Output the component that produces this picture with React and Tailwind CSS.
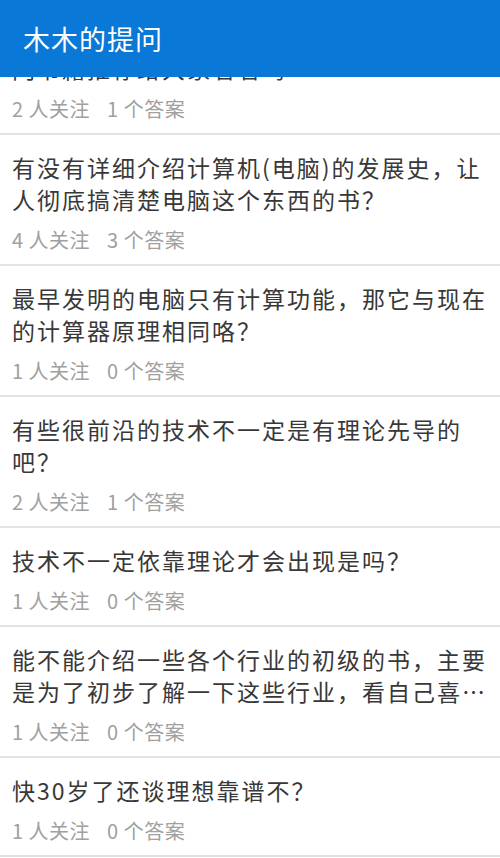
import React from "react";

const items = [
  { title: "有哪些适合初学者阅读的经典计算机科学入门书籍推荐给大家看看吗", meta: ["2", "1"] },
  { title: "有没有详细介绍计算机(电脑)的发展史，让人彻底搞清楚电脑这个东西的书？", meta: ["4", "3"] },
  { title: "最早发明的电脑只有计算功能，那它与现在的计算器原理相同咯？", meta: ["1", "0"] },
  { title: "有些很前沿的技术不一定是有理论先导的吧？", meta: ["2", "1"] },
  { title: "技术不一定依靠理论才会出现是吗？", meta: ["1", "0"] },
  { title: "能不能介绍一些各个行业的初级的书，主要是为了初步了解一下这些行业，看自己喜欢哪个行业", meta: ["1", "0"] },
  { title: "快30岁了还谈理想靠谱不？", meta: ["1", "0"] },
];

const font = { fontFamily: '"Noto Sans CJK SC", "Noto Sans", sans-serif' };

export default function App() {
  return (
    <div className="w-[500px] h-[858px] bg-white overflow-hidden flex flex-col" style={font}>
      <div className="relative z-10 h-[77px] shrink-0 bg-[#0a78d6] flex items-center pl-[23px]">
        <span className="text-white text-[27px] tracking-[1px] leading-none">木木的提问</span>
      </div>
      <div className="flex-1 overflow-hidden">
        <div className="-mt-[73px]">
          {items.map((it, i) => (
            <div key={i} className="border-b-2 border-[#e3e3e3] pl-[12px] pr-[10px] pt-[16px] pb-[12px]">
              <div className="text-[#383838] text-[23px] tracking-[2px] leading-[32px] line-clamp-2">
                {it.title}
              </div>
              <div className="mt-[13px] text-[#a0a0a0] text-[20px] leading-[24px] tracking-[0.5px] flex">
                <span>{it.meta[0]} 人关注</span>
                <span className="ml-[17px]">{it.meta[1]} 个答案</span>
              </div>
            </div>
          ))}
        </div>
      </div>
    </div>
  );
}
